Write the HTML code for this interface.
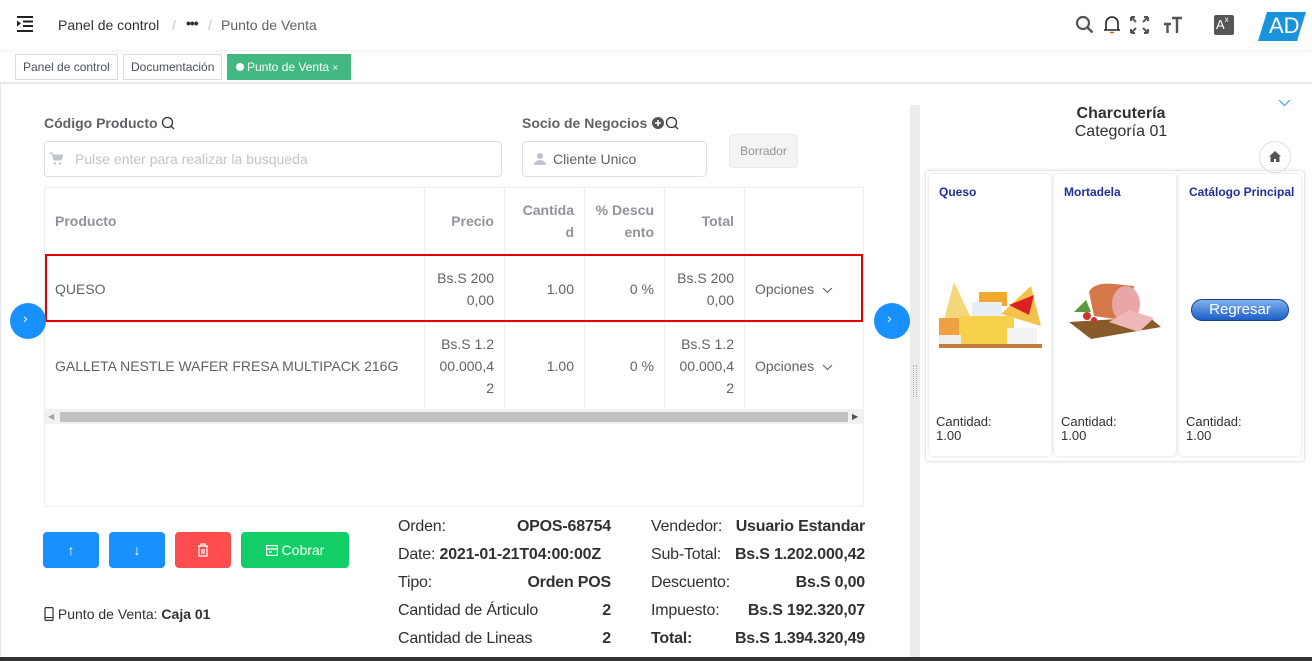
<!DOCTYPE html>
<html><head><meta charset="utf-8">
<style>
*{box-sizing:border-box;margin:0;padding:0}
body{width:1312px;height:661px;overflow:hidden;background:#fff;font-family:"Liberation Sans",sans-serif;color:#303133;position:relative}
.abs{position:absolute}
.hdr{left:0;top:0;width:1312px;height:50px;background:#fff;box-shadow:0 1px 3px rgba(0,21,41,.08)}
.tab{position:absolute;top:54px;height:26px;border:1px solid #d8dce5;font-size:12px;line-height:24px;padding:0 7px;color:#495060;background:#fff}
.lbl{font-size:14px;font-weight:bold;color:#606266}
.inp{border:1px solid #dcdfe6;border-radius:4px;height:36px;font-size:14px;line-height:34px}
table{border-collapse:collapse;font-size:14px}
td,th{border:1px solid #ebeef5;padding:0 10px;text-align:right;line-height:22px;color:#606266;font-weight:normal}
th{color:#909399;font-weight:bold}
.btn{position:absolute;top:532px;height:36px;border-radius:4px;color:#fff;font-size:14px;text-align:center;line-height:36px}
.s{position:absolute;font-size:16px;color:#303133;letter-spacing:-.2px}
.b{font-weight:bold}
.card{position:absolute;top:174px;width:122px;height:282px;background:#fff;border-radius:4px;box-shadow:0 0 3px rgba(0,0,0,.15)}
.card .t{position:absolute;left:10px;top:11px;font-size:12px;font-weight:bold;color:#1f2f9c;white-space:nowrap}
.card .q{position:absolute;left:7px;top:241px;font-size:13px;line-height:14px;color:#303133}
.circ{position:absolute;width:36px;height:36px;border-radius:50%;background:#1890ff;top:303px}
</style></head><body>
<div class="abs hdr"></div>
<svg class="abs" style="left:16px;top:16px" width="18" height="16" viewBox="0 0 18 16"><path d="M1 1h16M7 5.5h10M7 10h10M1 15h16" stroke="#222" stroke-width="2"/><path d="M1 4.5l4 3-4 3z" fill="#222"/></svg>
<div class="abs" style="left:58px;top:17px;font-size:14px;color:#303133">Panel de control</div>
<div class="abs" style="left:172px;top:17px;font-size:14px;color:#c0c4cc">/</div>
<div class="abs" style="left:186px;top:15px;font-size:14px;color:#303133;font-weight:bold;letter-spacing:-1px">•••</div>
<div class="abs" style="left:208px;top:17px;font-size:14px;color:#c0c4cc">/</div>
<div class="abs" style="left:221px;top:17px;font-size:14px;color:#606266">Punto de Venta</div>
<svg class="abs" style="left:1075px;top:15px" width="20" height="20" viewBox="0 0 20 20"><circle cx="8" cy="8" r="6" fill="none" stroke="#555" stroke-width="2.2"/><path d="M12.5 12.5l5 5" stroke="#555" stroke-width="2.5"/></svg>
<svg class="abs" style="left:1103px;top:15px" width="18" height="20" viewBox="0 0 18 20"><path d="M3 15V8a6 6 0 0 1 12 0v7H3zM1 15h16" fill="none" stroke="#222" stroke-width="1.6"/><path d="M7 17.5h4" stroke="#c60" stroke-width="1.5"/></svg>
<svg class="abs" style="left:1130px;top:16px" width="19" height="18" viewBox="0 0 19 18"><path d="M1 1l5 5M1 1v4M1 1h4M18 1l-5 5M18 1v4M18 1h-4M1 17l5-5M1 17v-4M1 17h4M18 17l-5-5M18 17v-4M18 17h-4" stroke="#555" stroke-width="2"/></svg>
<svg class="abs" style="left:1163px;top:15px" width="20" height="20" viewBox="0 0 20 20"><path d="M1 9h7M4.5 9v9M9 3h10M14 3v15" stroke="#555" stroke-width="2.4"/></svg>
<div class="abs" style="left:1214px;top:15px;width:20px;height:20px;background:#555;border-radius:2px;color:#fff;font-size:13px;line-height:20px;padding-left:2px">A<span style="font-size:8px;vertical-align:top;line-height:10px">x</span></div>
<svg class="abs" style="left:1258px;top:12px" width="48" height="29" viewBox="0 0 48 29"><path d="M9 0h39l-9 29H0z" fill="#1a93dd"/></svg>
<div class="abs" style="left:1269px;top:13px;font-size:22px;color:#fff">AD</div>

<div class="tab" style="left:15px">Panel de control</div>
<div class="tab" style="left:123px">Documentación</div>
<div class="tab" style="left:227px;width:124px;background:#42b983;border-color:#42b983;color:#fff;padding:0 8px"><span style="display:inline-block;width:8px;height:8px;background:#fff;border-radius:50%;margin-right:3px"></span>Punto de Venta <span style="font-size:10px">×</span></div>
<div class="abs" style="left:0;top:82px;width:1312px;height:2px;background:#e4e7ed"></div>
<div class="abs" style="left:0;top:84px;width:1px;height:577px;background:#e4e7ed"></div>

<div class="abs lbl" style="left:44px;top:115px">Código Producto <svg width="14" height="14" viewBox="0 0 14 14" style="vertical-align:-2px"><circle cx="6.5" cy="6.5" r="5" fill="none" stroke="#303133" stroke-width="1.3"/><path d="M10 10l3 3" stroke="#303133" stroke-width="1.3"/></svg></div>
<div class="abs inp" style="left:44px;top:141px;width:458px;color:#c0c4cc;padding-left:30px">Pulse enter para realizar la busqueda</div>
<svg class="abs" style="left:49px;top:152px" width="14" height="13" viewBox="0 0 14 13"><path d="M0 1h3l2 7h7l2-5H4" fill="#c0c4cc" stroke="#c0c4cc"/><circle cx="6" cy="11.5" r="1.3" fill="#c0c4cc"/><circle cx="11" cy="11.5" r="1.3" fill="#c0c4cc"/></svg>
<div class="abs lbl" style="left:522px;top:115px">Socio de Negocios <svg width="30" height="14" viewBox="0 0 30 14" style="vertical-align:-2px"><circle cx="7" cy="7" r="6" fill="#555"/><path d="M7 4v6M4 7h6" stroke="#fff" stroke-width="1.6"/><circle cx="20.5" cy="6.5" r="5" fill="none" stroke="#303133" stroke-width="1.3"/><path d="M24 10l3 3" stroke="#303133" stroke-width="1.3"/></svg></div>
<div class="abs inp" style="left:522px;top:141px;width:185px;padding-left:30px;color:#606266">Cliente Unico</div>
<svg class="abs" style="left:534px;top:152px" width="12" height="13" viewBox="0 0 12 13"><circle cx="6" cy="4" r="3" fill="#c0c4cc"/><path d="M0 13a6 5 0 0 1 12 0z" fill="#c0c4cc"/></svg>
<div class="abs" style="left:729px;top:134px;width:69px;height:34px;background:#f4f4f5;border:1px solid #e9e9eb;border-radius:4px;color:#909399;font-size:12px;text-align:center;line-height:32px">Borrador</div>

<div class="abs" style="left:44px;top:187px;width:820px;height:320px;border:1px solid #ebeef5"></div>
<table class="abs" style="left:44px;top:187px;width:820px">
<tr style="height:67px"><th style="text-align:left;width:380px">Producto</th><th style="width:80px">Precio</th><th style="width:80px">Cantida<br>d</th><th style="width:80px">% Descu<br>ento</th><th style="width:80px">Total</th><th></th></tr>
<tr style="height:68px"><td style="text-align:left">QUESO</td><td>Bs.S 200<br>0,00</td><td>1.00</td><td>0 %</td><td>Bs.S 200<br>0,00</td><td style="text-align:left">Opciones &nbsp;<svg width="11" height="7" viewBox="0 0 11 7"><path d="M1 1l4.5 4.5L10 1" fill="none" stroke="#606266" stroke-width="1.1"/></svg></td></tr>
<tr style="height:87px"><td style="text-align:left">GALLETA NESTLE WAFER FRESA MULTIPACK 216G</td><td>Bs.S 1.2<br>00.000,4<br>2</td><td>1.00</td><td>0 %</td><td>Bs.S 1.2<br>00.000,4<br>2</td><td style="text-align:left">Opciones &nbsp;<svg width="11" height="7" viewBox="0 0 11 7"><path d="M1 1l4.5 4.5L10 1" fill="none" stroke="#606266" stroke-width="1.1"/></svg></td></tr>
</table>
<div class="abs" style="left:45px;top:254px;width:818px;height:68px;border:2px solid #e00000"></div>
<div class="abs" style="left:45px;top:409px;width:818px;height:15px;background:#f1f1f1"></div>
<div class="abs" style="left:60px;top:412px;width:788px;height:10px;background:#c1c1c1"></div>
<div class="abs" style="left:48px;top:412px;font-size:8px;color:#a3a3a3">◀</div>
<div class="abs" style="left:852px;top:412px;font-size:8px;color:#505050">▶</div>

<div class="circ" style="left:10px"></div><div class="abs" style="left:23px;top:310px;color:#fff;font-size:14px">›</div>
<div class="circ" style="left:874px"></div><div class="abs" style="left:887px;top:310px;color:#fff;font-size:14px">›</div>

<div class="btn" style="left:43px;width:56px;background:#1890ff">↑</div>
<div class="btn" style="left:109px;width:56px;background:#1890ff">↓</div>
<div class="btn" style="left:175px;width:56px;background:#ff4d4f"><svg width="12" height="14" viewBox="0 0 12 14" style="vertical-align:-2px"><path d="M1 3h10M4 3V1h4v2M2 3v10h8V3M5 6v5M7 6v5" fill="none" stroke="#fff" stroke-width="1.2"/></svg></div>
<div class="btn" style="left:241px;width:108px;background:#13ce66"><svg width="12" height="11" viewBox="0 0 12 11" style="vertical-align:-1px"><rect x=".6" y=".6" width="10.8" height="9.8" fill="none" stroke="#fff" stroke-width="1.2"/><path d="M1 4h10M3 7h3" stroke="#fff" stroke-width="1.2"/></svg> Cobrar</div>
<div class="abs" style="left:44px;top:606px;font-size:14px;color:#303133"><svg width="10" height="14" viewBox="0 0 10 14" style="vertical-align:-2px"><rect x="1" y=".6" width="8" height="12.8" rx="1" fill="none" stroke="#303133" stroke-width="1.2"/><path d="M1 10.5h8" stroke="#303133"/></svg> Punto de Venta: <b>Caja 01</b></div>

<div class="s" style="left:398px;top:518px">Orden:</div><div class="s b" style="left:500px;top:518px;width:111px;text-align:right">OPOS-68754</div>
<div class="s" style="left:398px;top:546px">Date: <b>2021-01-21T04:00:00Z</b></div>
<div class="s" style="left:398px;top:574px">Tipo:</div><div class="s b" style="left:500px;top:574px;width:111px;text-align:right">Orden POS</div>
<div class="s" style="left:398px;top:602px">Cantidad de Árticulo</div><div class="s b" style="left:580px;top:602px;width:31px;text-align:right">2</div>
<div class="s" style="left:398px;top:630px">Cantidad de Lineas</div><div class="s b" style="left:580px;top:630px;width:31px;text-align:right">2</div>
<div class="s" style="left:651px;top:518px">Vendedor:</div><div class="s b" style="left:715px;top:518px;width:150px;text-align:right">Usuario Estandar</div>
<div class="s" style="left:651px;top:546px">Sub-Total:</div><div class="s b" style="left:715px;top:546px;width:150px;text-align:right">Bs.S 1.202.000,42</div>
<div class="s" style="left:651px;top:574px">Descuento:</div><div class="s b" style="left:740px;top:574px;width:125px;text-align:right">Bs.S 0,00</div>
<div class="s" style="left:651px;top:602px">Impuesto:</div><div class="s b" style="left:720px;top:602px;width:145px;text-align:right">Bs.S 192.320,07</div>
<div class="s b" style="left:651px;top:630px">Total:</div><div class="s b" style="left:710px;top:630px;width:155px;text-align:right">Bs.S 1.394.320,49</div>

<div class="abs" style="left:910px;top:105px;width:10px;height:556px;background:#ececec"></div>
<div class="abs" style="left:913px;top:365px;width:4px;height:32px;border-left:1px dotted #aaa;border-right:1px dotted #aaa"></div>

<div class="abs" style="left:1030px;top:105px;width:182px;text-align:center;font-size:16px;font-weight:bold;color:#303133">Charcutería</div>
<div class="abs" style="left:1030px;top:123px;width:182px;text-align:center;font-size:16px;color:#303133">Categoría 01</div>
<svg class="abs" style="left:1278px;top:99px" width="13" height="8" viewBox="0 0 13 8"><path d="M1 1l5.5 5.5L12 1" fill="none" stroke="#409eff" stroke-width="1.2"/></svg>
<div class="abs" style="left:1259px;top:141px;width:32px;height:32px;border-radius:50%;border:1px solid #dcdfe6;background:#fff"></div>
<svg class="abs" style="left:1269px;top:151px" width="12" height="11" viewBox="0 0 12 11"><path d="M6 0L0 5.5h1.5V11h3.5V8h2v3h3.5V5.5H12z" fill="#555"/></svg>
<div class="abs" style="left:925px;top:170px;width:380px;height:292px;border:1px solid #e4e7ed;border-radius:4px;box-shadow:0 0 4px rgba(0,0,0,.08)"></div>
<div class="card" style="left:929px"><div class="t">Queso</div>
<svg class="abs" style="left:10px;top:106px" width="103" height="68" viewBox="0 0 103 68"><rect width="103" height="68" fill="#fff"/><path d="M5 40L15 2l18 38z" fill="#f3d77a"/><rect x="40" y="12" width="28" height="14" fill="#f0a830"/><rect x="33" y="22" width="30" height="14" fill="#e8eef5"/><path d="M62 34l30-28 10 40z" fill="#f2c24d"/><path d="M70 25l25-10-5 20z" fill="#d22"/><rect x="0" y="38" width="30" height="30" fill="#f0a040"/><rect x="20" y="36" width="55" height="30" fill="#f8d14c"/><rect x="0" y="55" width="22" height="13" fill="#eee"/><rect x="68" y="48" width="30" height="16" fill="#f3f3f3"/><rect x="0" y="64" width="103" height="4" fill="#c47b3a"/></svg>
<div class="q">Cantidad:<br>1.00</div></div>
<div class="card" style="left:1054px"><div class="t">Mortadela</div>
<svg class="abs" style="left:10px;top:108px" width="103" height="58" viewBox="0 0 103 58"><rect width="103" height="58" fill="#fff"/><path d="M5 40l80-5 12 10-70 12z" fill="#8b5a2b"/><path d="M25 10q5-10 25-8l20 2-5 35-35-5z" fill="#d4784a"/><ellipse cx="62" cy="22" rx="14" ry="18" fill="#e9a6a6"/><path d="M45 40l20-12 25 8-15 14z" fill="#f0b8b8"/><circle cx="23" cy="34" r="4" fill="#c33"/><circle cx="30" cy="38" r="3" fill="#c33"/><path d="M10 30l12-12 5 12z" fill="#5a9a3a"/></svg>
<div class="q">Cantidad:<br>1.00</div></div>
<div class="card" style="left:1179px"><div class="t">Catálogo Principal</div>
<div class="abs" style="left:12px;top:125px;width:98px;height:22px;border-radius:11px;background:linear-gradient(#7fb2ef,#1d5fc8);border:1px solid #1a3f8a;color:#fff;font-size:15px;text-align:center;line-height:20px">Regresar</div>
<div class="q">Cantidad:<br>1.00</div></div>
<div class="abs" style="left:0;top:657px;width:1312px;height:4px;background:#333"></div>
</body></html>
